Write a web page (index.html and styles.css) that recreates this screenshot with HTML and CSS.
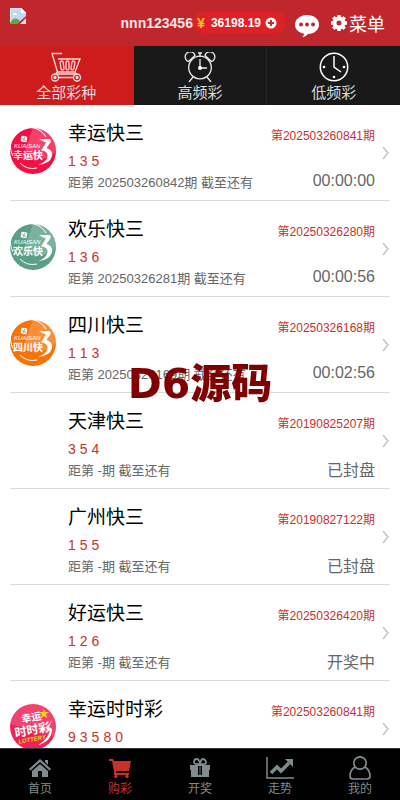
FILE: index.html
```html
<!DOCTYPE html>
<html lang="zh-CN">
<head>
  <meta charset="UTF-8">
  <meta name="viewport" content="width=device-width, initial-scale=1.0">
  <title>购彩</title>
  <link rel="stylesheet" href="styles.css">
</head>
<body>

<svg class="defs" aria-hidden="true">
  <symbol id="kuaisan" viewBox="0 0 46 46">
    <circle cx="23" cy="23" r="23"/>
    <path d="M23 0A23 23 0 0 1 46 23L40 30Q20 32 12 30Z" fill="#fff" opacity=".2"/>
    <path d="M3 28A19 19 0 0 1 36 9M10 35A18 18 0 0 0 27 40" fill="none" stroke="#fff" stroke-width="1"/>
    <rect x="11" y="8" width="6" height="6" rx="1" fill="#fff" transform="rotate(10 14 11)"/>
    <path d="M12 10l4 3M15 9l-2 4" stroke="#888" stroke-width=".8"/>
    <path d="M29 11H39.500Q42 12 40 15L36.500 20Q43 22 42 28Q40 36 28 37Q37 34 37.500 28Q38 23 31 22.500L36 14.500Q32 13 29 11Z" fill="#fff"/>
  </symbol>
  <symbol id="arrow" viewBox="0 0 8 14">
    <path d="M1 1l5 6-5 6" fill="none" stroke="#c3c3c3" stroke-width="1.500"/>
  </symbol>
</svg>

<header class="topbar">
  <svg class="avatar" viewBox="0 0 16 16" role="img" aria-label="头像">
    <path d="M0 0h11l5 5v6l-6 5H0z" fill="#c5d6f5"/>
    <path d="M0 0h11l5 5v1M.5 0v16" fill="none" stroke="#f4f4f4"/>
    <path d="M11 0v5h5z" fill="#fff"/>
    <path d="M3 7q0-2 2-2t2 2z" fill="#fff"/>
    <path d="M0 15q4-7 9-3l1 1-3 3H0z" fill="#55ad43"/>
    <path d="M9 16l7-6v6z" fill="#ddd"/>
    <path d="M7 16l9-8v2l-6 6z" fill="#bf272d"/>
  </svg>
  <div class="account">
    <span class="username">nnn123456</span>
    <a class="balance" href="#">
      <span class="yen">¥</span>
      <span>36198.19</span>
      <svg width="12" height="12" viewBox="0 0 12 12"><circle cx="6" cy="6" r="5.500" fill="#fff"/><path d="M6 3v6M3 6h6" stroke="#d8222a" stroke-width="2"/></svg>
    </a>
    <a class="chat" href="#" aria-label="客服">
      <svg width="26" height="24" viewBox="0 0 26 24"><path d="M13 1C20 1 25 5 25 10.500S20 20 14 20Q12 23 8 23.500Q10 22 10 19.500C5 19 1 15.500 1 10.500S6 1 13 1z" fill="#fff"/><g fill="#bf272d"><circle cx="7" cy="10.500" r="2"/><circle cx="13" cy="10.500" r="2"/><circle cx="19" cy="10.500" r="2"/></g></svg>
    </a>
    <button class="menu" type="button">
      <svg width="18" height="18" viewBox="0 0 18 18"><circle cx="9" cy="9" r="4.500" fill="none" stroke="#fff" stroke-width="4"/><path d="M9 1v3M9 14v3M1 9h3M14 9h3M3.300 3.300l2 2M12.700 12.700l2 2M3.300 14.700l2-2M12.700 5.300l2-2" stroke="#fff" stroke-width="3.500"/></svg>
      菜单
    </button>
  </div>
</header>

<nav class="tabs">
  <a class="tab active" href="#">
    <svg width="32" height="30" viewBox="0 0 32 30" fill="none" stroke="#f5dada" stroke-width="1.300">
      <path d="M12 1.500H2L7.500 20H25L30 7H8M7 20L5 23M25 20l2 3M7 22h18M9 25.500h14"/>
      <rect x="10.500" y="9" width="3" height="9" rx="1.500" transform="rotate(-8 12 13)"/>
      <rect x="16" y="9" width="3" height="9" rx="1.500"/>
      <rect x="21.500" y="9" width="3" height="9" rx="1.500" transform="rotate(10 23 13)"/>
      <circle cx="5" cy="25.500" r="3.500"/><circle cx="27" cy="25.500" r="3.500"/><circle cx="5" cy="25.500" r="1"/><circle cx="27" cy="25.500" r="1"/>
    </svg>
    全部彩种
  </a>
  <a class="tab" href="#">
    <svg width="32" height="30" viewBox="0 0 32 30" fill="none" stroke="#eee" stroke-width="1.300">
      <circle cx="16" cy="15.500" r="11.300"/>
      <path d="M4.500 9.500A5 5 0 1 1 11 3.500ZM27.500 9.500A5 5 0 1 0 21 3.500ZM16 1v4M14 1h4M9 25l-4 5M23 25l4 5M16 7v9h7"/>
      <circle cx="16" cy="16" r="2" fill="#fff" stroke="none"/>
    </svg>
    高频彩
  </a>
  <a class="tab" href="#">
    <svg width="32" height="30" viewBox="0 0 32 30" fill="none" stroke="#fff" stroke-width="1.500">
      <circle cx="16" cy="15" r="13.700"/>
      <path d="M16 4v11l7 5"/>
      <g fill="#fff" stroke="none"><circle cx="6" cy="15" r="1.300"/><circle cx="26" cy="15" r="1.300"/><circle cx="16" cy="25" r="1.300"/></g>
    </svg>
    低频彩
  </a>
</nav>

<main class="list">
  <a class="row" href="#">
    <svg class="badge" viewBox="0 0 46 46" fill="#f60f45"><use href="#kuaisan"/><text class="badge-en" x="4" y="20">KUAISAN</text><text class="badge-name" x="3" y="31">幸运快</text></svg>
    <div class="info">
      <div class="line title"><h2>幸运快三</h2><span class="issue">第202503260841期</span></div>
      <div class="nums"><span>1</span><span>3</span><span>5</span></div>
      <div class="line next"><span>距第 202503260842期 截至还有</span><span class="time">00:00:00</span></div>
    </div>
    <svg class="arrow"><use href="#arrow"/></svg>
  </a>
  <a class="row" href="#">
    <svg class="badge" viewBox="0 0 46 46" fill="#5a9f86"><use href="#kuaisan"/><text class="badge-en" x="4" y="20">KUAISAN</text><text class="badge-name" x="3" y="31">欢乐快</text></svg>
    <div class="info">
      <div class="line title"><h2>欢乐快三</h2><span class="issue">第20250326280期</span></div>
      <div class="nums"><span>1</span><span>3</span><span>6</span></div>
      <div class="line next"><span>距第 20250326281期 截至还有</span><span class="time">00:00:56</span></div>
    </div>
    <svg class="arrow"><use href="#arrow"/></svg>
  </a>
  <a class="row" href="#">
    <svg class="badge" viewBox="0 0 46 46" fill="#f57408"><use href="#kuaisan"/><text class="badge-en" x="4" y="20">KUAISAN</text><text class="badge-name" x="3" y="31">四川快</text></svg>
    <div class="info">
      <div class="line title"><h2>四川快三</h2><span class="issue">第20250326168期</span></div>
      <div class="nums"><span>1</span><span>1</span><span>3</span></div>
      <div class="line next"><span>距第 20250326169期 截至还有</span><span class="time">00:02:56</span></div>
    </div>
    <svg class="arrow"><use href="#arrow"/></svg>
  </a>
  <a class="row" href="#">
    <span class="badge"></span>
    <div class="info">
      <div class="line title"><h2>天津快三</h2><span class="issue">第20190825207期</span></div>
      <div class="nums"><span>3</span><span>5</span><span>4</span></div>
      <div class="line next"><span>距第 -期 截至还有</span><span class="time">已封盘</span></div>
    </div>
    <svg class="arrow"><use href="#arrow"/></svg>
  </a>
  <a class="row" href="#">
    <span class="badge"></span>
    <div class="info">
      <div class="line title"><h2>广州快三</h2><span class="issue">第20190827122期</span></div>
      <div class="nums"><span>1</span><span>5</span><span>5</span></div>
      <div class="line next"><span>距第 -期 截至还有</span><span class="time">已封盘</span></div>
    </div>
    <svg class="arrow"><use href="#arrow"/></svg>
  </a>
  <a class="row" href="#">
    <span class="badge"></span>
    <div class="info">
      <div class="line title"><h2>好运快三</h2><span class="issue">第20250326420期</span></div>
      <div class="nums"><span>1</span><span>2</span><span>6</span></div>
      <div class="line next"><span>距第 -期 截至还有</span><span class="time">开奖中</span></div>
    </div>
    <svg class="arrow"><use href="#arrow"/></svg>
  </a>
  <a class="row" href="#">
    <svg class="badge" viewBox="0 0 46 46">
      <circle cx="23" cy="23" r="23" fill="#ed2458"/>
      <path d="M23 0A23 23 0 0 1 44 32L0 20A23 23 0 0 1 23 0z" fill="#fff" opacity=".15"/>
      <path d="M34 5l1 3 4 0-3 2 1 4-3-2-3 2 1-4-3-2h4z" fill="#ffd51f"/>
      <path d="M42 16L36 25L40 27Q37 36 28 41Q42 37 42 25L39 23Z" fill="#fff"/>
      <g transform="rotate(-10 23 23)"><text class="badge-name" x="13" y="17">幸运</text><text class="badge-big" x="4" y="30">时时彩</text><text class="badge-lottery" x="6" y="37">LOTTERY</text></g>
    </svg>
    <div class="info">
      <div class="line title"><h2>幸运时时彩</h2><span class="issue">第202503260841期</span></div>
      <div class="nums"><span>9</span><span>3</span><span>5</span><span>8</span><span>0</span></div>
    </div>
    <svg class="arrow"><use href="#arrow"/></svg>
  </a>
</main>

<nav class="bottom">
  <a href="#">
    <svg width="24" height="24" viewBox="0 0 24 24" fill="currentColor"><path d="M12 3l11 10-1.500 1.500L12 6l-9.500 8.500L1 13zM17 4h3v5l-3-3zM12 8l8 7v6h-6v-6h-4v6H4v-6z"/></svg>
    首页
  </a>
  <a class="active" href="#">
    <svg width="24" height="24" viewBox="0 0 24 24" fill="currentColor"><path d="M1 3h4l1 2h17l-2 10H8v2h13v2H6v-3L4 5H1z"/><circle cx="8" cy="20.500" r="1.700"/><circle cx="19" cy="20.500" r="1.700"/></svg>
    购彩
  </a>
  <a href="#">
    <svg width="24" height="24" viewBox="0 0 24 24" fill="currentColor"><path d="M2 9h20v5H2zM3 14h18v7H3z"/><path d="M10 10h4v9h-4z" fill="#000"/><path d="M11 10h2v9h-2z" opacity=".4"/><path d="M12 8Q6 9 6 6T9 3Q11 3 12 8Q13 3 15 3T18 6T12 8z" fill="none" stroke="currentColor" stroke-width="1.800"/></svg>
    开奖
  </a>
  <a href="#">
    <svg width="28" height="24" viewBox="0 0 28 24" fill="none" stroke="currentColor"><path d="M1 1v21h27" stroke-width="1.500"/><path d="M5 17l6-6 4 4 8-8" stroke-width="3.500"/><path d="M19 3h8v8z" fill="currentColor" stroke="none"/></svg>
    走势
  </a>
  <a href="#">
    <svg width="24" height="24" viewBox="0 0 24 24" fill="none" stroke="currentColor" stroke-width="1.700"><circle cx="12" cy="7" r="6.200"/><path d="M7 11Q2 14 2 20Q2 23 5 23H19Q22 23 22 20Q22 14 17 11"/></svg>
    我的
  </a>
</nav>

<div class="watermark">D6源码</div>

</body>
</html>
```

FILE: styles.css
```css
* {
  box-sizing: border-box;
}
body {
  margin: 0;
  height: 100vh;
  display: flex;
  flex-direction: column;
  font-family: "Liberation Sans", "Noto Sans CJK SC", sans-serif;
  background: #fff;
}
a {
  color: inherit;
  text-decoration: none;
}
svg {
  display: block;
  flex-shrink: 0;
}
.defs {
  position: absolute;
  width: 0;
  height: 0;
}

/* header */
.topbar {
  height: 46px;
  flex-shrink: 0;
  display: flex;
  justify-content: space-between;
  padding: 0 15px 0 10px;
  background: #bf272d;
  color: #fff;
}
.avatar {
  width: 16px;
  height: 16px;
  margin-top: 8px;
}
.account {
  display: flex;
  align-items: center;
  padding-bottom: 1px;
}
.username {
  font-size: 14px;
  font-weight: bold;
  color: #f5e4e4;
}
.balance {
  display: flex;
  align-items: center;
  gap: 4px;
  height: 21px;
  padding: 0 9px 0 4px;
  border-radius: 11px;
  background: #de2027;
  font-size: 12px;
  font-weight: bold;
}
.yen {
  width: 10px;
  font-size: 14px;
  color: #ffc62b;
}
.chat {
  margin: 6px 10px 0 8px;
}
.menu {
  display: flex;
  align-items: center;
  gap: 1px;
  padding: 0;
  border: 0;
  background: none;
  color: #fff;
  font-family: inherit;
  font-size: 18px;
}

/* category tabs */
.tabs {
  display: flex;
  height: 59px;
  flex-shrink: 0;
}
.tab {
  flex: 1;
  display: flex;
  flex-direction: column;
  align-items: center;
  padding-top: 6px;
  background: #19191a;
  border-right: 1px solid #262627;
  color: #ddd;
  font-size: 15px;
  line-height: 22px;
}
.tab:last-child {
  border-right: 0;
}
.tab.active {
  background: #ce1c1d;
  border-color: #ce1c1d;
}

/* lottery list */
.list {
  flex: 1;
  min-height: 0;
  padding: 0 10px;
  overflow-y: auto;
  scrollbar-width: none;
}
.row {
  display: flex;
  align-items: center;
  height: 96px;
  border-bottom: 1px solid #d9d9d9;
}
.badge {
  width: 46px;
  height: 46px;
  margin: 0 12px 4px 0;
}
.badge-en {
  fill: #fff;
  font-size: 6px;
  font-style: italic;
}
.badge-name {
  fill: #fff;
  font-size: 10px;
  font-weight: bold;
}
.badge-big {
  fill: #fff;
  font-size: 12px;
  font-weight: bold;
}
.badge-lottery {
  fill: #ffd51f;
  font-size: 6px;
  font-weight: bold;
  font-style: italic;
}
.info {
  flex: 1;
  align-self: flex-start;
  padding-top: 13px;
}
.line {
  display: flex;
  justify-content: space-between;
  align-items: center;
}
.title {
  height: 32px;
}
.title h2 {
  margin: 0;
  font-size: 19px;
  line-height: 32px;
  font-weight: normal;
  color: #000;
}
.issue {
  font-size: 12px;
  color: #c9302c;
}
.nums {
  display: flex;
  gap: 4px;
  font-size: 14px;
  line-height: 22px;
  color: #c9302c;
}
.next {
  height: 18px;
  font-size: 13px;
  color: #666;
}
.time {
  font-size: 16px;
}
.arrow {
  width: 8px;
  height: 14px;
  margin-left: 7px;
}

/* bottom navigation */
.bottom {
  display: flex;
  height: 52px;
  flex-shrink: 0;
  border-top: 1px solid #333;
  background: #000;
}
.bottom a {
  flex: 1;
  display: flex;
  flex-direction: column;
  align-items: center;
  padding-top: 7px;
  color: #7f8c8d;
  font-size: 12px;
  line-height: 18px;
}
.bottom .active {
  color: #c9302c;
}

.watermark {
  position: fixed;
  top: 48%;
  left: 50%;
  transform: translate(-50%, -50%);
  font-family: "DejaVu Sans", "Noto Sans CJK SC", sans-serif;
  font-size: 41px;
  font-weight: 900;
  line-height: 40px;
  white-space: nowrap;
  color: #800000;
  pointer-events: none;
}
```
